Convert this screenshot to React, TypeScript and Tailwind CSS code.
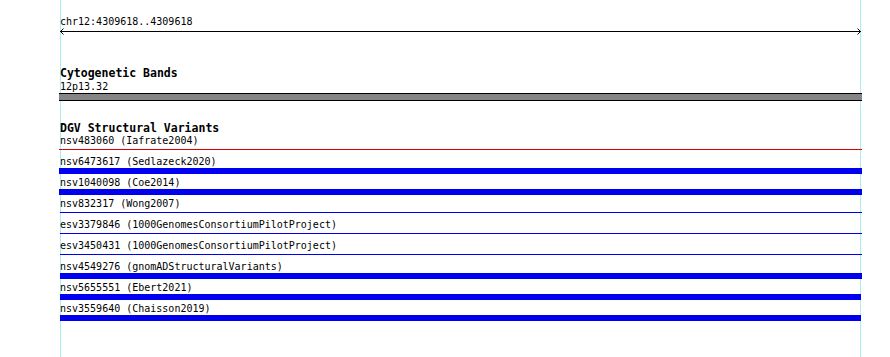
import React from "react";

type Row = { label: string; kind: "thick" | "thin"; color: string; ml: string; w: string };

const rows: Row[] = [
  { label: "nsv483060 (Iafrate2004)", kind: "thin", color: "bg-[#e00000]", ml: "ml-0", w: "w-[803px]" },
  { label: "nsv6473617 (Sedlazeck2020)", kind: "thick", color: "bg-[#0000f0]", ml: "ml-0", w: "w-[803px]" },
  { label: "nsv1040098 (Coe2014)", kind: "thick", color: "bg-[#0000f0]", ml: "ml-0", w: "w-[803px]" },
  { label: "nsv832317 (Wong2007)", kind: "thin", color: "bg-[#0000f0]", ml: "ml-[1px]", w: "w-[802px]" },
  { label: "esv3379846 (1000GenomesConsortiumPilotProject)", kind: "thin", color: "bg-[#0000f0]", ml: "ml-[1px]", w: "w-[802px]" },
  { label: "esv3450431 (1000GenomesConsortiumPilotProject)", kind: "thin", color: "bg-[#0000f0]", ml: "ml-[1px]", w: "w-[802px]" },
  { label: "nsv4549276 (gnomADStructuralVariants)", kind: "thick", color: "bg-[#0000f0]", ml: "ml-[1px]", w: "w-[802px]" },
  { label: "nsv5655551 (Ebert2021)", kind: "thick", color: "bg-[#0000f0]", ml: "ml-[1px]", w: "w-[801px]" },
  { label: "nsv3559640 (Chaisson2019)", kind: "thick", color: "bg-[#0000f0]", ml: "ml-[1px]", w: "w-[801px]" },
];

const mono = "font-['DejaVu_Sans_Mono',monospace]";

export default function App() {
  return (
    <div className={`relative w-[890px] h-[357px] overflow-hidden bg-white text-black ${mono}`}>
      {/* vertical guide lines behind content */}
      <div className="absolute left-[60px] top-0 h-full w-px bg-[#aaeef2]" />
      <div className="absolute left-[860px] top-0 h-full w-px bg-[#aaeef2]" />

      <div className="relative flex flex-col pl-[59px] pt-[16px]">
        <div className="pl-px text-[10px] leading-[12px]">chr12:4309618..4309618</div>
        <svg width="803" height="7" className="block">
          <line x1="1" y1="3.5" x2="802" y2="3.5" stroke="#000" strokeWidth="1" />
          <polyline points="4.5,0.5 1.5,3.5 4.5,6.5" fill="none" stroke="#000" strokeWidth="1" />
          <polyline points="798.5,0.5 801.5,3.5 798.5,6.5" fill="none" stroke="#000" strokeWidth="1" />
        </svg>

        <div className="mt-[31px] pl-px text-[11.5px] font-bold leading-[14px]">Cytogenetic Bands</div>
        <div className="pl-px text-[10px] leading-[13px]">12p13.32</div>
        <div className="h-[8px] w-[803px] border-y border-black bg-[#858585]" />

        <div className="mt-[20px] pl-px text-[11.5px] font-bold leading-[14px]">DGV Structural Variants</div>
        {rows.map((r) => (
          <div key={r.label} className="flex h-[21px] flex-col">
            <div className="pl-px text-[10px] leading-[12px] whitespace-pre">{r.label}</div>
            {r.kind === "thick" ? (
              <div className={`h-[6px] ${r.ml} ${r.w} ${r.color}`} />
            ) : (
              <div className={`mt-[2px] h-px ${r.ml} ${r.w} ${r.color}`} />
            )}
          </div>
        ))}
      </div>
    </div>
  );
}
